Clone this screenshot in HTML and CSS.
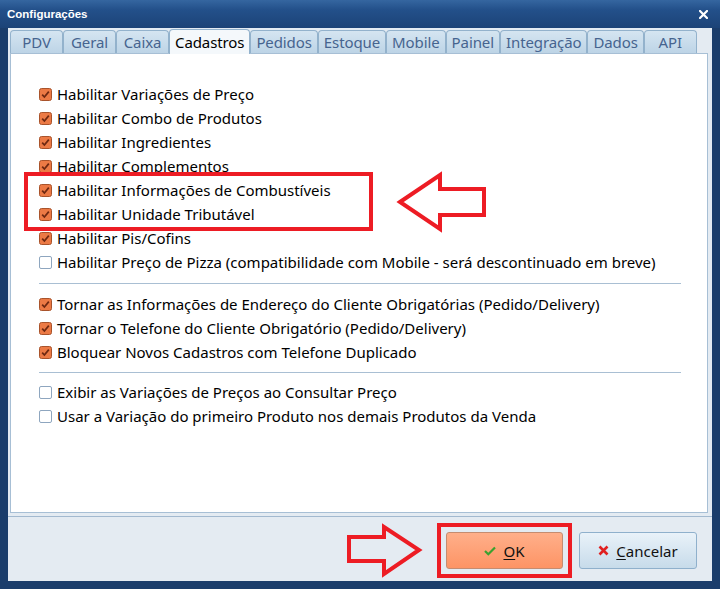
FILE: index.html
```html
<!DOCTYPE html>
<html lang="pt">
<head>
<meta charset="utf-8">
<title>Configurações</title>
<link rel="stylesheet" href="styles.css">
</head>
<body>
<div class="window">
  <div class="titlebar">
    <span class="title">Configurações</span>
    <svg class="close" width="9" height="9" viewBox="0 0 9 9"><path d="M1 1 L8 8 M8 1 L1 8" stroke="#fff" stroke-width="2.2" stroke-linecap="square"/></svg>
  </div>
  <div class="client">
    <div class="tabs">
      <div class="tab">PDV</div>
      <div class="tab">Geral</div>
      <div class="tab">Caixa</div>
      <div class="tab active">Cadastros</div>
      <div class="tab">Pedidos</div>
      <div class="tab">Estoque</div>
      <div class="tab">Mobile</div>
      <div class="tab">Painel</div>
      <div class="tab">Integração</div>
      <div class="tab">Dados</div>
      <div class="tab">API</div>
    </div>
    <div class="panel">
      <div class="group">
        <div class="row"><svg class="cb" viewBox="0 0 13 13"><rect x=".5" y=".5" width="12" height="12" rx="2" class="cb-box"/><path d="M3.2 6.6 L5.4 9 L9.8 3.6" class="cb-mark"/></svg>Habilitar Variações de Preço</div>
        <div class="row"><svg class="cb" viewBox="0 0 13 13"><rect x=".5" y=".5" width="12" height="12" rx="2" class="cb-box"/><path d="M3.2 6.6 L5.4 9 L9.8 3.6" class="cb-mark"/></svg>Habilitar Combo de Produtos</div>
        <div class="row"><svg class="cb" viewBox="0 0 13 13"><rect x=".5" y=".5" width="12" height="12" rx="2" class="cb-box"/><path d="M3.2 6.6 L5.4 9 L9.8 3.6" class="cb-mark"/></svg>Habilitar Ingredientes</div>
        <div class="row"><svg class="cb" viewBox="0 0 13 13"><rect x=".5" y=".5" width="12" height="12" rx="2" class="cb-box"/><path d="M3.2 6.6 L5.4 9 L9.8 3.6" class="cb-mark"/></svg>Habilitar Complementos</div>
        <div class="row"><svg class="cb" viewBox="0 0 13 13"><rect x=".5" y=".5" width="12" height="12" rx="2" class="cb-box"/><path d="M3.2 6.6 L5.4 9 L9.8 3.6" class="cb-mark"/></svg>Habilitar Informações de Combustíveis</div>
        <div class="row"><svg class="cb" viewBox="0 0 13 13"><rect x=".5" y=".5" width="12" height="12" rx="2" class="cb-box"/><path d="M3.2 6.6 L5.4 9 L9.8 3.6" class="cb-mark"/></svg>Habilitar Unidade Tributável</div>
        <div class="row"><svg class="cb" viewBox="0 0 13 13"><rect x=".5" y=".5" width="12" height="12" rx="2" class="cb-box"/><path d="M3.2 6.6 L5.4 9 L9.8 3.6" class="cb-mark"/></svg>Habilitar Pis/Cofins</div>
        <div class="row"><span class="cb off"></span>Habilitar Preço de Pizza (compatibilidade com Mobile - será descontinuado em breve)</div>
      </div>
      <div class="sep"></div>
      <div class="group">
        <div class="row"><svg class="cb" viewBox="0 0 13 13"><rect x=".5" y=".5" width="12" height="12" rx="2" class="cb-box"/><path d="M3.2 6.6 L5.4 9 L9.8 3.6" class="cb-mark"/></svg>Tornar as Informações de Endereço do Cliente Obrigatórias (Pedido/Delivery)</div>
        <div class="row"><svg class="cb" viewBox="0 0 13 13"><rect x=".5" y=".5" width="12" height="12" rx="2" class="cb-box"/><path d="M3.2 6.6 L5.4 9 L9.8 3.6" class="cb-mark"/></svg>Tornar o Telefone do Cliente Obrigatório (Pedido/Delivery)</div>
        <div class="row"><svg class="cb" viewBox="0 0 13 13"><rect x=".5" y=".5" width="12" height="12" rx="2" class="cb-box"/><path d="M3.2 6.6 L5.4 9 L9.8 3.6" class="cb-mark"/></svg>Bloquear Novos Cadastros com Telefone Duplicado</div>
      </div>
      <div class="sep sep-last"></div>
      <div class="group">
        <div class="row"><span class="cb off"></span>Exibir as Variações de Preços ao Consultar Preço</div>
        <div class="row"><span class="cb off"></span>Usar a Variação do primeiro Produto nos demais Produtos da Venda</div>
      </div>
    </div>
    <div class="footer">
      <button class="btn ok"><svg class="ico" width="12" height="10" viewBox="0 0 12 10"><path d="M1 5 L4.3 8.2 L11 1.5" fill="none" stroke="#3aa12f" stroke-width="2.2"/></svg><span><u>O</u>K</span></button>
      <button class="btn cancel"><svg class="ico" width="11" height="11" viewBox="0 0 11 11"><path d="M1.5 1.5 L9.5 9.5 M9.5 1.5 L1.5 9.5" stroke="#e02020" stroke-width="2.6"/></svg><span><u>C</u>ancelar</span></button>
    </div>
  </div>
  <svg class="annot" width="720" height="589" viewBox="0 0 720 589">
    <rect x="26" y="174" width="345" height="55" fill="none" stroke="#ed1c24" stroke-width="4"/>
    <polygon points="400,202 440,175 440,189 484,189 484,215 440,215 440,229" fill="none" stroke="#ed1c24" stroke-width="4"/>
    <rect x="439" y="525" width="131" height="51" fill="none" stroke="#ed1c24" stroke-width="4"/>
    <polygon points="349,537 384,537 384,527 419,550 384,574 384,561 349,561" fill="none" stroke="#ed1c24" stroke-width="4"/>
  </svg>
</div>
</body>
</html>
```
FILE: styles.css
```css
html, body {
  margin: 0;
  padding: 0;
  background: #1b3d6b;
}

.window {
  position: relative;
  width: 720px;
  height: 589px;
  background: #1b3d6b;
  display: flex;
  flex-direction: column;
  font-family: "Noto Sans", "DejaVu Sans", sans-serif;
  overflow: hidden;
}

.titlebar {
  height: 28px;
  flex: none;
  display: flex;
  align-items: center;
  justify-content: space-between;
  padding: 0 12px 0 7px;
  background: linear-gradient(#3566a0 0%, #23508a 35%, #1c4377 100%);
  box-sizing: border-box;
}

.title {
  color: #fff;
  font-family: "Liberation Sans", Arial, sans-serif;
  font-weight: bold;
  font-size: 11.5px;
}

.close {
  display: block;
}

.client {
  flex: 1;
  margin: 0 8px 8px 8px;
  background: #e4ebf2;
  display: flex;
  flex-direction: column;
  min-height: 0;
}

.tabs {
  display: flex;
  flex: none;
  height: 23px;
  padding: 2px 0 0 2px;
  position: relative;
  z-index: 1;
}

.tab {
  height: 23px;
  box-sizing: border-box;
  min-width: 53px;
  padding: 0 5px;
  border: 1px solid #93b2cc;
  border-bottom: none;
  border-radius: 4px 4px 0 0;
  background: linear-gradient(#d5e5f1, #bdd4e6);
  color: #46648f;
  font-size: 15px;
  letter-spacing: -0.1px;
  display: flex;
  align-items: center;
  justify-content: center;
}

.tab.active {
  height: 25px;
  margin-top: -1px;
  padding: 0 5px;
  background: #f4f8fb;
  color: #000;
}

.panel {
  flex: 1;
  margin: 0 4px 0 2px;
  background: #fff;
  border: 1px solid #a7bfd5;
  padding: 28px 26px 0 28px;
  box-sizing: border-box;
  min-height: 0;
}

.group {
  display: flex;
  flex-direction: column;
}

.row {
  height: 24px;
  display: flex;
  align-items: center;
  gap: 5px;
  font-size: 15px;
  color: #000;
  white-space: nowrap;
}

.cb {
  width: 13px;
  height: 13px;
  flex: none;
  display: block;
}

.cb-box {
  fill: #ec7a45;
  stroke: #a9532b;
}

.cb-mark {
  fill: none;
  stroke: #6e2811;
  stroke-width: 1.7;
}

.cb.off {
  box-sizing: border-box;
  border: 1px solid #8ea6bf;
  border-radius: 2px;
  background: #fff;
}

.sep {
  height: 1px;
  background: #a9bfd3;
  margin: 9px 0 8px 0;
}

.sep.sep-last {
  margin: 8px 0 7px 0;
}

.footer {
  flex: none;
  margin-top: 3px;
  border-top: 1px solid #a2b9cf;
  display: flex;
  justify-content: flex-end;
  gap: 16px;
  padding: 15px 15px 12px 0;
}

.btn {
  height: 37px;
  box-sizing: border-box;
  border-radius: 3px;
  font-family: "Noto Sans", "DejaVu Sans", sans-serif;
  font-size: 15px;
  color: #111;
  display: flex;
  align-items: center;
  justify-content: center;
  gap: 7px;
  padding: 0;
}

.btn u {
  text-underline-offset: 2px;
}

.btn.ok {
  width: 117px;
  border: 1px solid #c58c70;
  background: linear-gradient(#ffaf8a, #fd9465);
}

.btn.cancel {
  width: 118px;
  border: 1px solid #8fb0cc;
  background: linear-gradient(#e9f2f9, #c7dbea);
}

.ico {
  display: block;
}

.annot {
  position: absolute;
  left: 0;
  top: 0;
  pointer-events: none;
}
```
